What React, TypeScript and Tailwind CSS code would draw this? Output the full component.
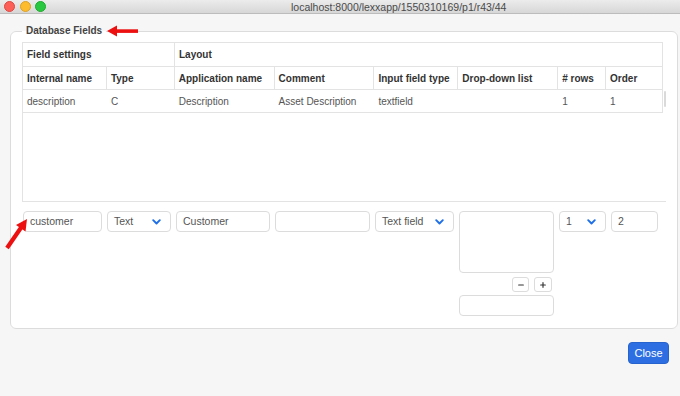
import { Minus, Plus } from "lucide-react";

const COLS = ["w-[84px]", "w-[68px]", "w-[100px]", "w-[100px]", "w-[84px]", "w-[100px]", "w-[48px]", "w-[56px]"];
const HEAD = ["Internal name", "Type", "Application name", "Comment", "Input field type", "Drop-down list", "# rows", "Order"];
const ROW = ["description", "C", "Description", "Asset Description", "textfield", "", "1", "1"];

function Chevron() {
	return <svg width="9" height="6" viewBox="0 0 9 6" className="shrink-0">
		<path d="M1.2 1.2 L4.5 4.5 L7.8 1.2" fill="none" stroke="#1f6fe8" strokeWidth="1.9" strokeLinecap="round" strokeLinejoin="round" />
	</svg>
}

function TextInput(props: { width: string, value?: string }) {
	return <div className={`${props.width} h-[21px] shrink-0 border border-[#dcdcdc] rounded-[4px] bg-white flex items-center pl-[6px] text-[10.5px] text-[#555]`}>
		{props.value}
	</div>
}

function Select(props: { width: string, value: string }) {
	return <div className={`${props.width} h-[21px] shrink-0 border border-[#dcdcdc] rounded-[4px] bg-white flex items-center justify-between pl-[6px] pr-[9px] text-[10.5px] text-[#555]`}>
		<span>{props.value}</span>
		<Chevron />
	</div>
}

export default function App() {
	return <div className="w-[680px] h-[396px] bg-[#f6f6f6] relative overflow-hidden font-['Liberation_Sans',Arial,sans-serif]">
		<div className="h-[14px] border-b border-[#bcbcbc] bg-linear-to-b from-[#ececec] to-[#d7d7d7] flex items-center">
			<div className="flex gap-[4.5px] ml-[4px]">
				<div className="w-[11px] h-[11px] rounded-full bg-[#fc5f57] border border-[#df4641]" />
				<div className="w-[11px] h-[11px] rounded-full bg-[#fdbc2e] border border-[#dea123]" />
				<div className="w-[11px] h-[11px] rounded-full bg-[#29c840] border border-[#1daa2c]" />
			</div>
			<span className="ml-[245px] text-[10.5px] leading-[12px] text-[#4a4a4a]">localhost:8000/lexxapp/1550310169/p1/r43/44</span>
		</div>

		<fieldset className="ml-[10px] mt-[11px] w-[664px] border border-[#dcdcdc] rounded-[6px] bg-white px-[11px] pt-[5px] pb-[12px]">
			<legend className="px-[4px] text-[10px] leading-[12px] font-bold text-[#444]">Database Fields</legend>

			<div className="w-[644px] h-[160px] border-l border-b border-[#e3e3e3] relative">
				<div className="w-[640px] border-t border-r border-[#e3e3e3] text-[10px]">
					<div className="flex h-[24px] border-b border-[#e3e3e3] font-bold text-[#333]">
						<div className="w-[152px] border-r border-[#e3e3e3] flex items-center pl-[4px]">Field settings</div>
						<div className="w-[487px] flex items-center pl-[4px]">Layout</div>
					</div>
					<div className="flex h-[23px] border-b border-[#e3e3e3] font-bold text-[#333]">
						{HEAD.map((h, i) => <div key={h} className={`${COLS[i]} ${i < 7 ? "border-r" : ""} border-[#e3e3e3] flex items-center pl-[4px]`}>{h}</div>)}
					</div>
					<div className="flex h-[23px] border-b border-[#e3e3e3] text-[#555]">
						{ROW.map((v, i) => <div key={i} className={`${COLS[i]} flex items-center pl-[4px]`}>{v}</div>)}
					</div>
				</div>
				<div className="absolute right-0 top-[49px] w-[2px] h-[16px] rounded-full bg-[#dadada]" />
			</div>

			<div className="flex items-start gap-[5px] mt-[9px] ml-[1px]">
				<TextInput width="w-[79px]" value="customer" />
				<Select width="w-[64px]" value="Text" />
				<TextInput width="w-[94px]" value="Customer" />
				<TextInput width="w-[95px]" />
				<Select width="w-[79px]" value="Text field" />
				<div className="w-[95px] shrink-0 flex flex-col">
					<div className="h-[62px] border border-[#dcdcdc] rounded-[4px] bg-white" />
					<div className="flex justify-end gap-[5px] mt-[4px] mr-[2px]">
						<div className="w-[17px] h-[15px] border border-[#dcdcdc] rounded-[3px] bg-white flex items-center justify-center">
							<Minus size={8} strokeWidth={3.5} color="#333" />
						</div>
						<div className="w-[18px] h-[15px] border border-[#dcdcdc] rounded-[3px] bg-white flex items-center justify-center">
							<Plus size={8} strokeWidth={3.5} color="#333" />
						</div>
					</div>
					<div className="h-[21px] mt-[3px] border border-[#dcdcdc] rounded-[4px] bg-white" />
				</div>
				<Select width="w-[47px]" value="1" />
				<TextInput width="w-[47px]" value="2" />
			</div>
		</fieldset>

		<div className="flex justify-end mt-[13px] mr-[11px]">
			<button className="w-[41px] h-[22px] rounded-[4px] bg-[#2d6fe2] border border-[#2763cc] text-white text-[11px] font-['Liberation_Sans',Arial,sans-serif]">Close</button>
		</div>

		<svg className="absolute left-[104px] top-[25px]" width="36" height="12" viewBox="0 0 36 12">
			<polygon points="3,6 13,0.5 13,11.5" fill="#ec1010" />
			<rect x="12" y="4.3" width="22" height="3.6" fill="#ec1010" />
		</svg>
		<svg className="absolute left-0 top-[212px]" width="34" height="40" viewBox="0 0 34 40">
			<line x1="7" y1="36" x2="21.5" y2="15" stroke="#ec1010" strokeWidth="4.2" />
			<polygon points="27,7 25.5,19.5 16,13" fill="#ec1010" />
		</svg>
	</div>
}
